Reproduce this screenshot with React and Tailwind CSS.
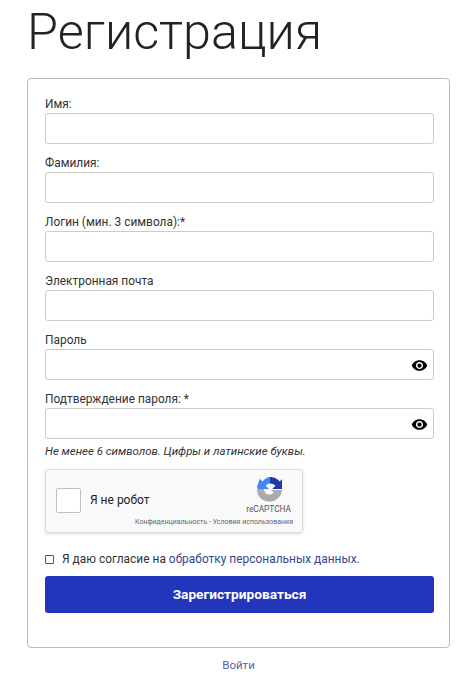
import React from "react";

const Field = ({ label, eye }) => (
  <div className="h-[59px]">
    <label className="block h-[15px] text-[11.9px] leading-[15px] text-[#333]">{label}</label>
    <div className="relative mt-[1px] h-[31px] rounded-[3px] border border-[#ccc] bg-white">
      {eye && (
        <svg viewBox="0 0 24 24" className="absolute right-[5px] top-[7px] h-[17px] w-[17px] fill-black">
          <path d="M12 4.5C7 4.5 2.73 7.61 1 12c1.73 4.39 6 7.5 11 7.5s9.27-3.11 11-7.5c-1.73-4.39-6-7.5-11-7.5zM12 17c-2.76 0-5-2.24-5-5s2.24-5 5-5 5 2.24 5 5-2.24 5-5 5zm0-8c-1.66 0-3 1.34-3 3s1.34 3 3 3 3-1.34 3-3-1.34-3-3-3z" />
        </svg>
      )}
    </div>
  </div>
);

const RecaptchaLogo = () => (
  <svg viewBox="0 0 28 28" className="h-[26px] w-[26px]">
    <path d="M1 14 L8.5 14 C9 18 11 20 14 20 C16.5 20 18 19 19 17.5 L16.5 15 L28 15 C27.5 22 21.5 27.5 14 27.5 C6.5 27.5 1 21.5 1 14 Z" fill="#ababab" />
    <path d="M4 3 L7 6 C9 3.5 11.5 1 15 1 L15 8 C13 8 11.5 9 10.5 10.5 L14 14 L2 14 L1 12 Z" fill="#4285f4" />
    <path d="M15 1 C20 1 24 3.5 25.5 6 L28 3.5 L28 14 L17.5 14 L21 10.5 C19.5 9 18 8 15 8 Z" fill="#1c3aa9" />
  </svg>
);

export default function App() {
  return (
    <div className="min-h-[679px] overflow-hidden bg-white pl-[27px] pr-[20px] font-['Roboto',sans-serif]">
      <h1 className="h-[78px] text-[50.3px] font-light leading-[64px] text-[#222]">Регистрация</h1>

      <form className="h-[570px] rounded-[4px] border border-[#bbb] pl-[17px] pr-[15px] pt-[18px]">
        <Field label="Имя:" />
        <Field label="Фамилия:" />
        <Field label="Логин (мин. 3 символа):*" />
        <Field label="Электронная почта" />
        <Field label="Пароль" eye />
        <Field label="Подтверждение пароля: *" eye />

        <p className="-mt-[7px] text-[11.45px] italic leading-[14px] text-[#333]">
          Не менее 6 символов. Цифры и латинские буквы.
        </p>

        <div className="relative mt-[11px] flex h-[64px] w-[258px] items-start rounded-[3px] border border-[#ddd] bg-[#f9f9f9] shadow-[0_1px_3px_rgba(0,0,0,0.15)]">
          <span className="ml-[10px] mt-[18px] h-[25px] w-[25px] rounded-[2px] border border-[#c1c1c1] bg-white" />
          <span className="ml-[9px] mt-[23px] text-[12px] leading-[15px] text-[#222]">Я не робот</span>
          <div className="absolute right-[11px] top-[6px] flex flex-col items-center">
            <RecaptchaLogo />
            <span className="mt-[2px] text-[8.3px] leading-[10px] text-[#555]">reCAPTCHA</span>
          </div>
          <span className="absolute bottom-[6px] right-[9px] whitespace-nowrap text-[7px] leading-[8px] text-[#666]">
            Конфиденциальность - Условия использования
          </span>
        </div>

        <div className="mt-[19px] flex h-[15px] items-center text-[11.93px] leading-[15px] text-[#333]">
          <span className="mr-[8px] h-[9px] w-[9px] rounded-[1px] border border-[#555]" />
          <span>
            Я даю согласие на <a className="text-[#3a4590]">обработку персональных данных.</a>
          </span>
        </div>

        <button
          type="button"
          className="mt-[9px] h-[37px] w-full rounded-[3px] bg-[#2236bb] text-[13.7px] font-bold text-white"
        >
          Зарегистрироваться
        </button>
      </form>

      <div className="mt-[10px] text-center text-[11.5px] leading-[15px] text-[#5a5fa4]">Войти</div>
    </div>
  );
}
